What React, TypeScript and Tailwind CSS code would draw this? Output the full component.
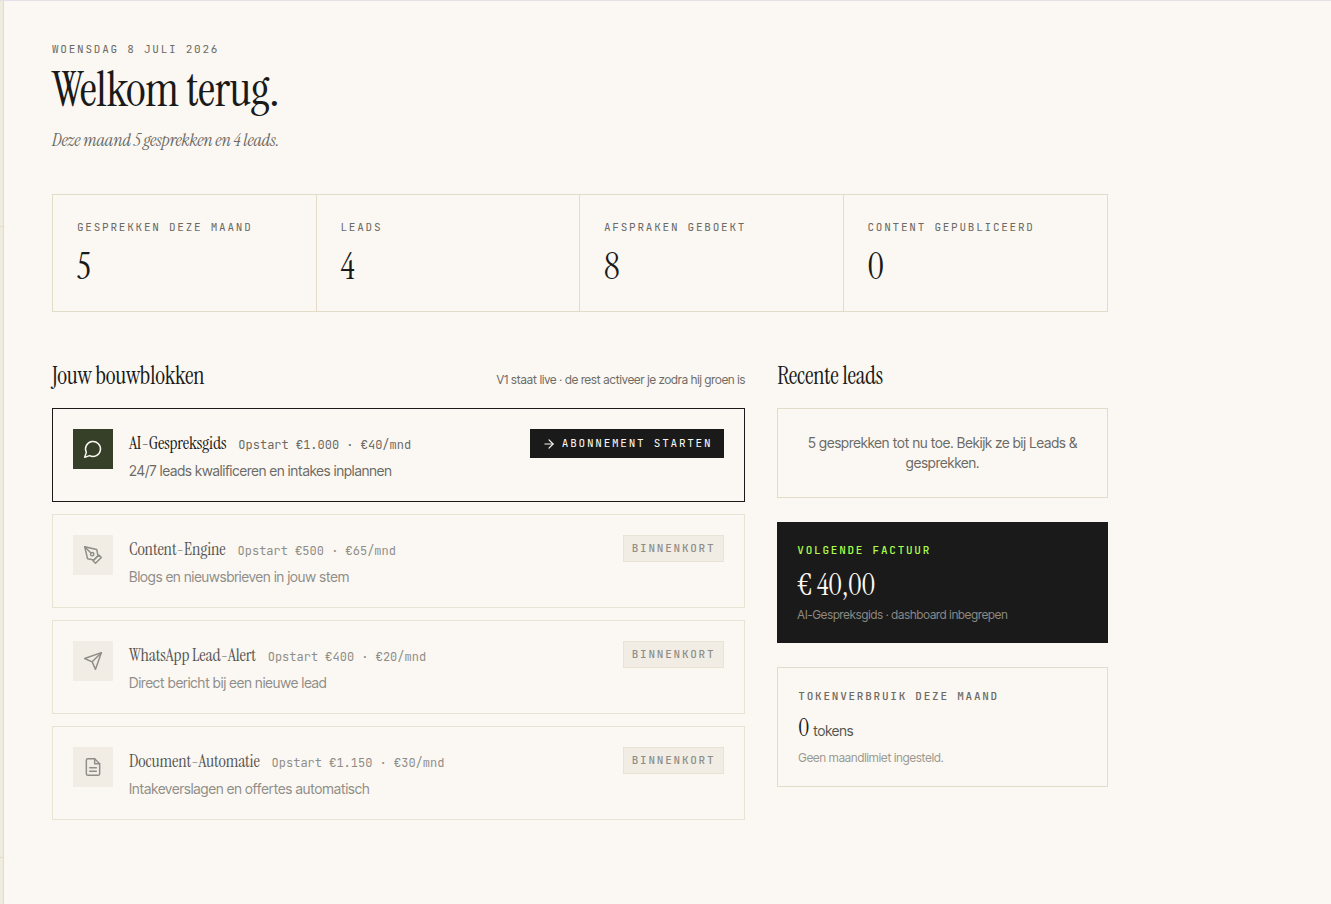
import React from 'react';
import { ArrowRight } from 'lucide-react';

const SERIF = "font-['Instrument_Serif','Liberation_Serif',serif] tracking-[-0.01em]";
const MONO = "font-['JetBrains_Mono','Liberation_Mono',monospace]";
const LABEL = "font-['JetBrains_Mono','Liberation_Mono',monospace] text-[11px] leading-[17px] tracking-[0.16em] uppercase";

const STATS = [
    { label: 'Gesprekken deze maand', value: 5 },
    { label: 'Leads', value: 4 },
    { label: 'Afspraken geboekt', value: 8 },
    { label: 'Content gepubliceerd', value: 0 },
];

interface Block {
    name: string;
    price: string;
    description: string;
    icon: React.ReactNode;
    available?: boolean;
}

const BLOCKS: Block[] = [
    {
        name: 'AI-Gespreksgids',
        price: 'Opstart €1.000 · €40/mnd',
        description: '24/7 leads kwalificeren en intakes inplannen',
        icon: <path d="M7.9 20A9 9 0 1 0 4 16.1L2 22Z" />,
        available: true,
    },
    {
        name: 'Content-Engine',
        price: 'Opstart €500 · €65/mnd',
        description: 'Blogs en nieuwsbrieven in jouw stem',
        icon: (
            <>
                <path d="m12 19 7-7 3 3-7 7-3-3z" />
                <path d="m18 13-1.5-7.5L2 2l3.5 14.5L13 18l5-5z" />
                <path d="m2 2 7.586 7.586" />
                <circle cx="11" cy="11" r="2" />
            </>
        ),
    },
    {
        name: 'WhatsApp Lead-Alert',
        price: 'Opstart €400 · €20/mnd',
        description: 'Direct bericht bij een nieuwe lead',
        icon: (
            <>
                <path d="m22 2-7 20-4-9-9-4Z" />
                <path d="M22 2 11 13" />
            </>
        ),
    },
    {
        name: 'Document-Automatie',
        price: 'Opstart €1.150 · €30/mnd',
        description: 'Intakeverslagen en offertes automatisch',
        icon: (
            <>
                <path d="M14 2H6a2 2 0 0 0-2 2v16a2 2 0 0 0 2 2h12a2 2 0 0 0 2-2V8z" />
                <path d="M14 2v6h6" />
                <path d="M16 13H8" />
                <path d="M16 17H8" />
            </>
        ),
    },
];

function BlockCard({ block }: { block: Block }) {
    return (
        <li
            className={`flex items-start gap-4 border p-5 ${block.available ? 'border-[#1a1a1a]' : 'border-[#e2dcc8] opacity-75'
                }`}
        >
            <div
                className={`flex size-10 shrink-0 items-center justify-center ${block.available ? 'bg-[#364028] text-[#fbf8f3]' : 'bg-[#eeeae1] text-[#6b6a64]'
                    }`}
            >
                <svg
                    viewBox="0 0 24 24"
                    className="size-5"
                    fill="none"
                    stroke="currentColor"
                    strokeWidth={1.75}
                    strokeLinecap="round"
                    strokeLinejoin="round"
                    aria-hidden="true"
                >
                    {block.icon}
                </svg>
            </div>
            <div className="min-w-0 flex-1">
                <div className="flex flex-wrap items-baseline gap-x-3">
                    <h3 className={`${SERIF} text-lg leading-7`}>{block.name}</h3>
                    <span className={`${MONO} text-xs text-[#6b6a64]`}>{block.price}</span>
                </div>
                <p className="mt-1 text-sm leading-5 text-[#6b6a64]">{block.description}</p>
            </div>
            {block.available ? (
                <button type="button" className="flex shrink-0 items-center gap-1.5 bg-[#1a1a1a] px-3 py-1.5 text-[#fbf8f3]">
                    <ArrowRight className="size-3.5" strokeWidth={2} />
                    <span className={LABEL}>Abonnement starten</span>
                </button>
            ) : (
                <span className={`${LABEL} shrink-0 border border-[#e2dcc8] bg-[#eeeae1] px-2 py-1 font-medium text-[#6b6a64]`}>
                    Binnenkort
                </span>
            )}
        </li>
    );
}

export default function App() {
    return (
        <div className="flex min-h-screen border-t border-[#e6dfe8] bg-[#fbf8f3] font-['Inter_Tight','Inter',sans-serif] text-[#1a1a1a]">
            {/* Collapsed sidebar edge */}
            <aside className="flex w-1 shrink-0 flex-col border-r border-[#e2dcc8] bg-[#f0ebdf]">
                <div className="h-[226px] border-b border-[#e2dcc8]" />
                <div className="flex-1" />
                <div className="h-[47px] border-t border-[#e2dcc8]" />
            </aside>

            <main className="max-w-6xl flex-1 px-12 py-10">
                <header>
                    <p className={`${LABEL} text-[#6b6a64]`}>Woensdag 8 juli 2026</p>
                    <h1 className={`${SERIF} mt-1 text-5xl leading-[56px]`}>Welkom terug.</h1>
                    <p className={`${SERIF} mt-2 text-lg leading-7 text-[#6b6a64] italic`}>
                        Deze maand 5 gesprekken en 4 leads.
                    </p>
                </header>

                <dl className="mt-10 grid grid-cols-4 border border-[#e2dcc8]">
                    {STATS.map((stat) => (
                        <div key={stat.label} className="border-r border-[#e2dcc8] p-6 last:border-r-0">
                            <dt className={`${LABEL} text-[#6b6a64]`}>{stat.label}</dt>
                            <dd className={`${SERIF} mt-2.5 text-4xl leading-[41px]`}>{stat.value}</dd>
                        </div>
                    ))}
                </dl>

                <div className="mt-12 grid grid-cols-12 gap-8">
                    <section className="col-span-8">
                        <div className="mb-4 flex items-baseline justify-between">
                            <h2 className={`${SERIF} text-2xl leading-8`}>Jouw bouwblokken</h2>
                            <p className="text-xs text-[#6b6a64]">V1 staat live · de rest activeer je zodra hij groen is</p>
                        </div>
                        <ul className="flex flex-col gap-3">
                            {BLOCKS.map((block) => (
                                <BlockCard key={block.name} block={block} />
                            ))}
                        </ul>
                    </section>

                    <aside className="col-span-4 flex flex-col">
                        <h2 className={`${SERIF} mb-4 text-2xl leading-8`}>Recente leads</h2>
                        <p className="border border-[#e2dcc8] p-6 text-center text-sm leading-5 text-[#6b6a64]">
                            5 gesprekken tot nu toe. Bekijk ze bij Leads &amp; gesprekken.
                        </p>

                        <div className="mt-6 bg-[#1a1a1a] p-5 text-[#fbf8f3]">
                            <h3 className={`${LABEL} font-medium text-[#aaff4d]`}>Volgende factuur</h3>
                            <p className={`${SERIF} mt-2 text-3xl leading-9`}>€ 40,00</p>
                            <p className="mt-1 text-xs leading-4 text-[#8d8b84]">AI-Gespreksgids · dashboard inbegrepen</p>
                        </div>

                        <div className="mt-6 border border-[#e2dcc8] p-5">
                            <h3 className={`${LABEL} font-medium text-[#6b6a64]`}>Tokenverbruik deze maand</h3>
                            <p className="mt-1.5 flex items-baseline gap-1">
                                <span className={`${SERIF} text-2xl leading-[33px]`}>0</span>
                                <span className="text-sm leading-5 text-[#55544f]">tokens</span>
                            </p>
                            <p className="mt-1.5 text-xs leading-4 text-[#9a988f]">Geen maandlimiet ingesteld.</p>
                        </div>
                    </aside>
                </div>
            </main>
        </div>
    );
}
